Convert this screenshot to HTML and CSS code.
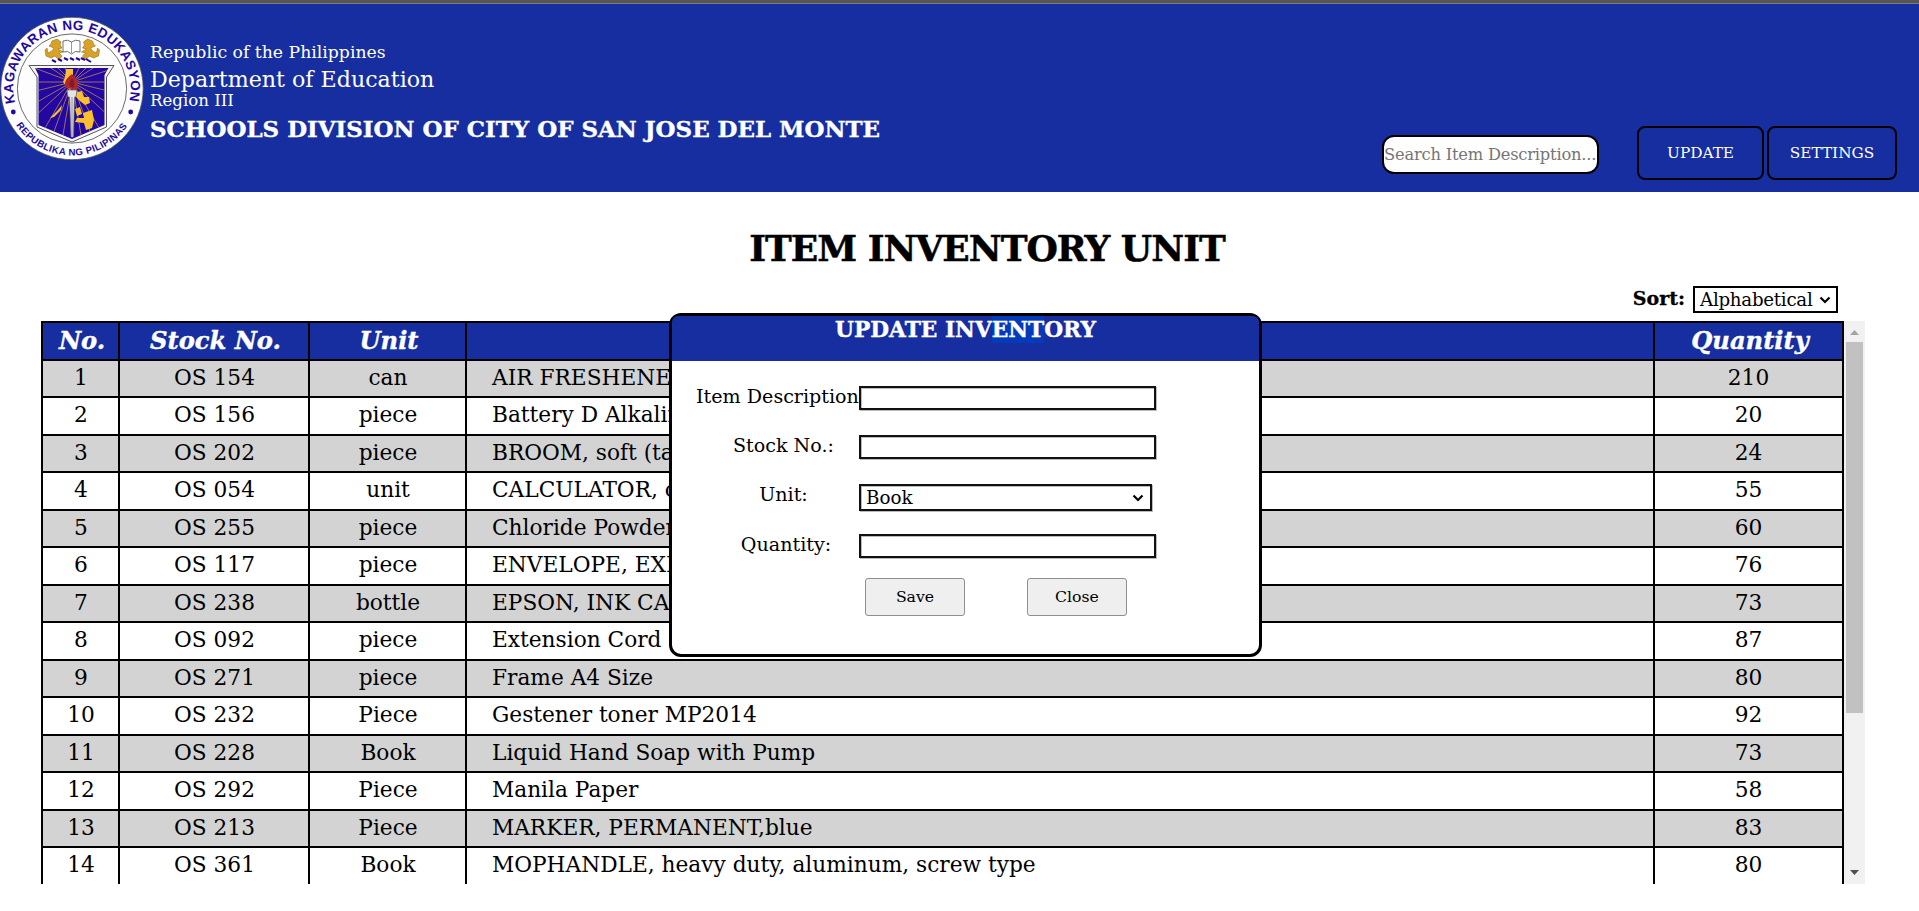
FILE: index.html
```html
<!DOCTYPE html>
<html lang="en">
<head>
<meta charset="utf-8">
<title>Item Inventory Unit</title>
<link rel="stylesheet" href="styles.css">
</head>
<body>
<header class="masthead">
  <svg class="seal" viewBox="0 0 144 144" width="144" height="144" aria-label="Department of Education seal">
    <defs>
      <path id="arc-top" d="M15.1 85.8A58.7 58.7 0 1 1 128.9 85.8"/>
      <path id="arc-bottom" d="M16.2 108.2A66.6 66.6 0 0 0 127.8 108.2"/>
      <clipPath id="shield-clip"><path d="M35 51H108.5L104.5 58V108L72 122L38.5 108V58Z"/></clipPath>
    </defs>
    <circle cx="72" cy="71.5" r="71.2" fill="#fdfdfd" stroke="#555" stroke-width=".8"/>
    <circle cx="72" cy="71.5" r="54.6" fill="#fdfdfd" stroke="#444" stroke-width=".8"/>
    <text class="seal-text" font-size="13.4"><textPath href="#arc-top" textLength="211" lengthAdjust="spacing">KAGAWARAN NG EDUKASYON</textPath></text>
    <text class="seal-text" font-size="9.6"><textPath href="#arc-bottom" textLength="131" lengthAdjust="spacing">REPUBLIKA NG PILIPINAS</textPath></text>
    <circle cx="13.3" cy="95" r="2.4" fill="#2208a0"/>
    <circle cx="130.7" cy="95" r="2.4" fill="#2208a0"/>
    <path d="M29 48.5H114L106.5 60V110L72 125L37 110V60Z" fill="#f4f4f4" stroke="#444" stroke-width=".9"/>
    <path d="M35 51H108.5L104.5 58V108L72 122L38.5 108V58Z" fill="#2208a0"/>
    <g clip-path="url(#shield-clip)" stroke="#b98a52" stroke-width=".8">
      <path d="M32 65H112M72 65L32 50M72 65L42 45M72 65L52 45M72 65L62 45M72 65L82 45M72 65L92 45M72 65L102 45M72 65L112 52M72 65L32 75M72 65L32 88M72 65L32 102M72 65L42 116M72 65L52 120M72 65L62 124M72 65L82 124M72 65L92 120M72 65L102 116M72 65L112 102M72 65L112 88M72 65L112 75"/>
    </g>
    <path d="M66 52L73 52L73 59L76 68L70 73L66 69L63 65L65 60ZM77 75L82 74L84 80L89 80L90 86L85 88L80 84L76 80ZM75 92L80 90L82 97L77 99ZM83 96L92 93L94 103L92 111L86 113L84 106L75 105L77 101L84 101ZM62 88L61 93L54 100L50 101L58 93Z" fill="#fcbf2d"/>
    <path d="M66 71C63 65 67 61 72 57C76 61 80 65 77 73Z" fill="#b3242b"/>
    <path d="M70 69C68 66 71 64 72 61C75 65 75 68 73 71Z" fill="#7d1d2c"/>
    <path d="M67 73H77L76 80H74.5L73.5 120H71L69.5 80H68Z" fill="#e4e4e4" stroke="#666" stroke-width=".7"/>
    <path d="M72 80V119" stroke="#888" stroke-width=".9"/>
    <path id="lion" d="M52 24L57 22L61 25L60 28L62 31L58 32L63 35L59 36L62 39L59 43L55 39L51 41L46 39L45 33L47 31L48 36L52 34L54 31L49 29L51 27Z" fill="#d9a126" stroke="#9b6d14" stroke-width=".6"/>
    <use href="#lion" transform="matrix(-1 0 0 1 144.5 0)"/>
    <path d="M63 24Q68 22 71.5 25Q75 22 80 24V35Q75 33 71.5 37Q68 33 63 35Z" fill="#fff" stroke="#333" stroke-width=".7"/>
    <path d="M71.5 25V36" stroke="#555" stroke-width=".6"/>
    <path d="M52 43L56 45M58 42L62 44M64 41L68 43M70 41L74 43M76 41L80 43M81 41L85 43M86 42L91 45" stroke="#2208a0" stroke-width="2"/>
  </svg>
  <div class="agency">
    <div class="republic">Republic of the Philippines</div>
    <div class="department">Department of Education</div>
    <div class="region">Region III</div>
    <div class="division">SCHOOLS DIVISION OF CITY OF SAN JOSE DEL MONTE</div>
  </div>
  <nav class="actions">
    <input class="search" type="text" placeholder="Search Item Description...">
    <button class="nav-btn nav-update">UPDATE</button>
    <button class="nav-btn nav-settings">SETTINGS</button>
  </nav>
</header>

<main class="content">
  <h1 class="title">ITEM INVENTORY UNIT</h1>
  <div class="sort">
    <span class="sort-label">Sort:</span>
    <div class="select sort-select"><span>Alphabetical</span><svg class="chevron" viewBox="0 0 12 8"><path d="M1.5 1.5L6 6L10.5 1.5"/></svg></div>
  </div>
  <div class="table-wrap">
    <table class="inventory">
      <colgroup><col class="c-no"><col class="c-stock"><col class="c-unit"><col class="c-desc"><col class="c-qty"></colgroup>
      <thead><tr><th>No.</th><th>Stock No.</th><th>Unit</th><th></th><th>Quantity</th></tr></thead>
      <tbody>
        <tr><td>1</td><td>OS 154</td><td>can</td><td>AIR FRESHENER</td><td>210</td></tr>
        <tr><td>2</td><td>OS 156</td><td>piece</td><td>Battery D Alkaline</td><td>20</td></tr>
        <tr><td>3</td><td>OS 202</td><td>piece</td><td>BROOM, soft (tambo)</td><td>24</td></tr>
        <tr><td>4</td><td>OS 054</td><td>unit</td><td>CALCULATOR, compact</td><td>55</td></tr>
        <tr><td>5</td><td>OS 255</td><td>piece</td><td>Chloride Powder</td><td>60</td></tr>
        <tr><td>6</td><td>OS 117</td><td>piece</td><td>ENVELOPE, EXPANDING</td><td>76</td></tr>
        <tr><td>7</td><td>OS 238</td><td>bottle</td><td>EPSON, INK CARTRIDGE</td><td>73</td></tr>
        <tr><td>8</td><td>OS 092</td><td>piece</td><td>Extension Cord</td><td>87</td></tr>
        <tr><td>9</td><td>OS 271</td><td>piece</td><td>Frame A4 Size</td><td>80</td></tr>
        <tr><td>10</td><td>OS 232</td><td>Piece</td><td>Gestener toner MP2014</td><td>92</td></tr>
        <tr><td>11</td><td>OS 228</td><td>Book</td><td>Liquid Hand Soap with Pump</td><td>73</td></tr>
        <tr><td>12</td><td>OS 292</td><td>Piece</td><td>Manila Paper</td><td>58</td></tr>
        <tr><td>13</td><td>OS 213</td><td>Piece</td><td>MARKER, PERMANENT,blue</td><td>83</td></tr>
        <tr><td>14</td><td>OS 361</td><td>Book</td><td>MOPHANDLE, heavy duty, aluminum, screw type</td><td>80</td></tr>
      </tbody>
    </table>
    <div class="scrollbar">
      <svg class="arrow" viewBox="0 0 21 21"><path d="M6 14L10.5 9L15 14Z" fill="#a3a3a3"/></svg>
      <div class="thumb"></div>
      <svg class="arrow" viewBox="0 0 21 21"><path d="M6 7L10.5 12L15 7Z" fill="#505050"/></svg>
    </div>
  </div>
</main>

<section class="modal">
  <div class="modal-head">UPDATE INV<span class="selected">ENT</span>ORY</div>
  <div class="form">
    <label class="label-wide">Item Description</label><input class="field" type="text">
    <label>Stock No.:</label><input class="field" type="text">
    <label>Unit:</label><div class="select unit-select"><span>Book</span><svg class="chevron" viewBox="0 0 12 8"><path d="M1.5 1.5L6 6L10.5 1.5"/></svg></div>
    <label class="label-qty">Quantity:</label><input class="field" type="text">
  </div>
  <div class="buttons"><button class="btn">Save</button><button class="btn">Close</button></div>
</section>
</body>
</html>
```
FILE: styles.css
```css
* { box-sizing: border-box; }
body {
  margin: 0;
  height: 911px;
  position: relative;
  overflow: hidden;
  background: #fff;
  color: #000;
  font-family: "DejaVu Serif", serif;
}
input, button { font-family: inherit; margin: 0; }

.masthead {
  display: flex;
  height: 192px;
  border-top: 3px solid #565656;
  background: #162ea0;
  box-shadow: inset 0 1px #7a7a7a;
  color: #fff;
}
.seal { margin-top: 14px; flex: none; }
.seal-text { font-family: "Liberation Sans", Arial, sans-serif; font-weight: 700; fill: #2208a0; }
.agency { padding: 37px 0 0 6px; white-space: nowrap; }
.republic { font-size: 17.25px; line-height: 24px; }
.department { margin-top: 2px; font-size: 22.15px; line-height: 26px; }
.region { font-size: 16.6px; line-height: 17px; }
.division { margin-top: 5px; font-size: 22.95px; line-height: 30px; font-weight: 700; -webkit-text-stroke: .4px; }
.actions { display: flex; margin: 123px 22px 0 auto; }
.search {
  width: 217px;
  height: 39px;
  margin: 9px 38px 0 0;
  padding: 0;
  border: 2px solid #000;
  border-radius: 12px;
  background: #fff;
  font-size: 16.3px;
  letter-spacing: -.2px;
}
.search::placeholder { color: #757575; opacity: 1; }
.nav-btn {
  height: 54px;
  padding: 0 0 1px;
  border: 2px solid #000;
  border-radius: 8px;
  background: transparent;
  color: #fff;
  font-size: 15.3px;
}
.nav-update { width: 127px; margin-right: 3px; }
.nav-settings { width: 130px; }

.content { padding: 31px 0 0 41px; }
.title {
  margin: 0;
  padding-left: 14px;
  font-size: 36px;
  line-height: 50px;
  letter-spacing: -1px;
  text-align: center;
  -webkit-text-stroke: .5px;
}
.sort { display: flex; justify-content: flex-end; align-items: center; height: 27px; margin: 13px 81px 8px 0; }
.sort-label { font-size: 19px; line-height: 25px; padding-bottom: 2px; font-weight: 700; margin-right: 8px; -webkit-text-stroke: .3px; }
.select { display: flex; align-items: center; justify-content: space-between; border: 2px solid #000; background: #fff; }
.sort-select { width: 145px; height: 27px; padding: 0 5px 0 5px; font-size: 18.2px; letter-spacing: -.25px; }
.chevron { width: 12px; height: 8px; fill: none; stroke: #000; stroke-width: 2.2; }

.table-wrap { display: flex; height: 563px; overflow: hidden; }
.inventory { width: 1803px; flex: none; table-layout: fixed; border-spacing: 0; border-right: 2px solid #000; }
.c-no { width: 77px; }
.c-stock { width: 190px; }
.c-unit { width: 157px; }
.c-desc { width: 1188px; }
.c-qty { width: 189px; }
.inventory th, .inventory td { border: solid #000; border-width: 2px 0 0 2px; overflow: hidden; white-space: nowrap; }
.inventory th { height: 38px; padding: 0 0 0 3px; background: #162ea0; color: #fff; font-size: 24.2px; line-height: 30px; font-style: italic; -webkit-text-stroke: .4px; }
.inventory td { height: 38px; padding: 0 0 2px; font-size: 21.7px; line-height: 30px; text-align: center; }
.inventory td:nth-child(-n+3) { padding-left: 1px; }
.inventory td:nth-child(4) { padding-left: 25px; text-align: left; }
.inventory tbody tr:nth-child(odd) td { height: 37px; background: #d3d3d3; }
.scrollbar { display: flex; flex-direction: column; width: 21px; background: #f1f1f1; }
.arrow { width: 21px; height: 21px; }
.thumb { width: 17px; height: 371px; margin: 0 auto 150px 2px; background: #c1c1c1; }

.modal {
  position: absolute;
  left: 669px;
  top: 313px;
  width: 593px;
  height: 344px;
  border: 3px solid #000;
  border-radius: 12px;
  background: #fff;
}
.modal-head {
  height: 45px;
  border-radius: 6px 6px 0 0;
  background: #162ea0;
  color: #fff;
  font-size: 21.7px;
  font-weight: 700;
  line-height: 28px;
  text-align: center;
  -webkit-text-stroke: .4px;
}
.selected { display: inline-block; height: 27px; background: #043abc; }
.form {
  display: grid;
  grid-template-columns: 163px 298px;
  grid-template-rows: 49px 49px 50px 49px;
  padding: 25px 0 0 24px;
  font-size: 19.1px;
}
.form label { padding-left: 12px; line-height: 22px; text-align: center; white-space: nowrap; }
.form .label-wide { padding-left: 0; }
.form .label-qty { padding-left: 17px; }
.field, .unit-select { border: 2px solid #111; box-shadow: 1px 1px #bbb, inset 1px 1px #bbb; }
.field { width: 297px; height: 24px; }
.unit-select { width: 293px; height: 27px; padding: 0 6px 0 5px; font-size: 18.3px; }
.buttons { display: flex; gap: 62px; padding-left: 193px; margin-top: -5px; }
.btn {
  width: 100px;
  height: 38px;
  padding: 0 0 2px;
  border: 1px solid #8f8f8f;
  border-radius: 3px;
  background: #efefef;
  color: #000;
  font-size: 15.7px;
}
```
